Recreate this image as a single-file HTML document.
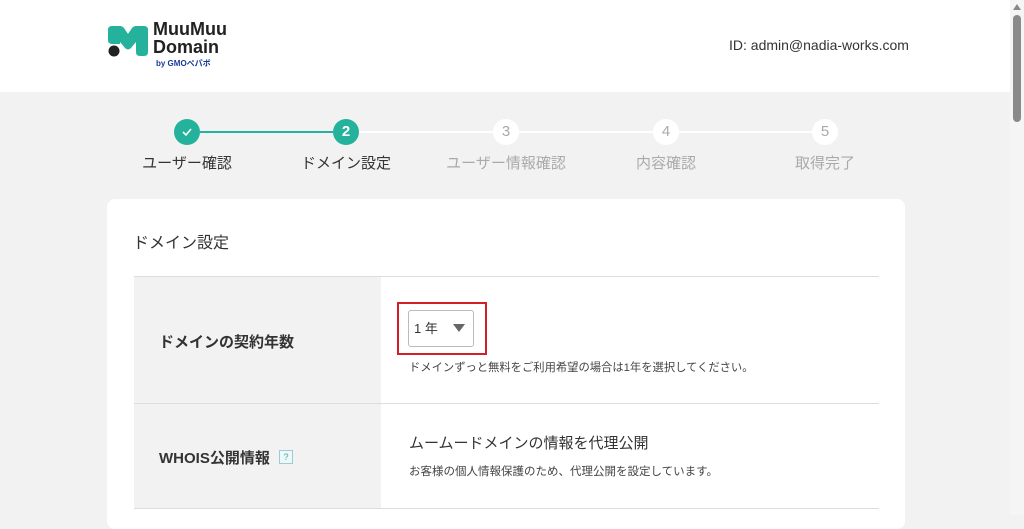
<!DOCTYPE html>
<html><head><meta charset="utf-8"><style>
*{margin:0;padding:0;box-sizing:border-box}
body{width:1024px;height:515px;overflow:hidden;background:#f2f2f2;font-family:"Liberation Sans","Noto Sans CJK JP",sans-serif;color:#333;position:relative}
.hdr{position:absolute;left:0;top:0;width:1010px;height:92px;background:#fff}
.abs{position:absolute}
.c{position:absolute;width:26px;height:26px;border-radius:50%;top:119px;text-align:center;line-height:26px;font-size:15px}
.lbl{position:absolute;top:152px;font-size:15px;width:160px;text-align:center}
.line{position:absolute;top:131px;height:2px}
.card{position:absolute;left:107px;top:199px;width:798px;height:330px;background:#fff;border-radius:8px}
.sb{position:absolute;left:1010px;top:0;width:14px;height:515px;background:#f5f5f5}
</style></head><body>
<div class="hdr">
<svg class="abs" style="left:106px;top:24px" width="44" height="34" viewBox="0 0 44 34"><path d="M6 2 H14 Q16 2 18 4 L22 10 L26 4 Q28 2 30 2 H38 Q42 2 42 6 V28 Q42 32 38 32 H34 Q30 32 30 28 V18 L25 24 Q22 27 19 24 L14 18 V20 H6 Q2 20 2 16 V6 Q2 2 6 2 Z" fill="#25b29c"/><circle cx="8" cy="27" r="5.5" fill="#222"/></svg>
<div class="abs" style="left:153px;top:20px;font-size:18px;font-weight:bold;line-height:18px;color:#222">MuuMuu<br>Domain</div>
<div class="abs" style="left:156px;top:58px;font-size:8px;font-weight:bold;color:#1a3a9a">by GMOペパボ</div>
<div class="abs" style="left:729px;top:37px;font-size:14px;color:#333">ID: admin@nadia-works.com</div>
</div>
<div class="line" style="left:200px;width:133px;background:#25b29c"></div>
<div class="line" style="left:359px;width:134px;background:#fff"></div>
<div class="line" style="left:519px;width:134px;background:#fff"></div>
<div class="line" style="left:679px;width:133px;background:#fff"></div>
<div class="c" style="left:174px;background:#25b29c;color:#fff"><svg width="14" height="14" viewBox="0 0 14 14" style="margin-top:6px"><path d="M3 7 L6 10 L11 4" stroke="#fff" stroke-width="1.6" fill="none"/></svg></div>
<div class="c" style="left:333px;background:#25b29c;color:#fff;font-weight:bold">2</div>
<div class="c" style="left:493px;background:#fff;color:#aaa">3</div>
<div class="c" style="left:653px;background:#fff;color:#aaa">4</div>
<div class="c" style="left:812px;background:#fff;color:#aaa">5</div>
<div class="lbl" style="left:107px">ユーザー確認</div>
<div class="lbl" style="left:266px">ドメイン設定</div>
<div class="lbl" style="left:426px;color:#aaa">ユーザー情報確認</div>
<div class="lbl" style="left:586px;color:#aaa">内容確認</div>
<div class="lbl" style="left:745px;color:#aaa">取得完了</div>
<div class="card"></div>
<div class="abs" style="left:133px;top:229px;font-size:16px">ドメイン設定</div>
<div class="abs" style="left:134px;top:276px;width:745px;height:1px;background:#ddd"></div>
<div class="abs" style="left:134px;top:277px;width:247px;height:126px;background:#f2f2f2"></div>
<div class="abs" style="left:134px;top:403px;width:745px;height:1px;background:#ddd"></div>
<div class="abs" style="left:134px;top:404px;width:247px;height:104px;background:#f2f2f2"></div>
<div class="abs" style="left:134px;top:508px;width:745px;height:1px;background:#ddd"></div>
<div class="abs" style="left:159px;top:331px;font-size:15px;font-weight:bold">ドメインの契約年数</div>
<div class="abs" style="left:397px;top:302px;width:90px;height:53px;border:2px solid #d0202a"></div>
<div class="abs" style="left:408px;top:310px;width:66px;height:37px;border:1px solid #bbb;border-radius:3px;background:#fff;font-size:13px;line-height:35px;padding-left:5px">1 年</div>
<svg class="abs" style="left:453px;top:324px" width="12" height="9"><path d="M0 0 H12 L6 8 Z" fill="#666"/></svg>
<div class="abs" style="left:409px;top:359px;font-size:11.3px;color:#444">ドメインずっと無料をご利用希望の場合は1年を選択してください。</div>
<div class="abs" style="left:159px;top:447px;font-size:15px;font-weight:bold">WHOIS公開情報</div>
<div class="abs" style="left:279px;top:450px;width:14px;height:14px;border:1px solid #9cd;background:#eef8f7;font-size:9px;color:#4aa;text-align:center;line-height:12px">?</div>
<div class="abs" style="left:409px;top:432px;font-size:15px">ムームードメインの情報を代理公開</div>
<div class="abs" style="left:409px;top:463px;font-size:11.5px;color:#444">お客様の個人情報保護のため、代理公開を設定しています。</div>
<div class="sb"><svg class="abs" style="left:3px;top:4px" width="8" height="6"><path d="M0 6 L4 0 L8 6Z" fill="#888"/></svg><div class="abs" style="left:3px;top:15px;width:8px;height:107px;background:#8a8a8a;border-radius:4px"></div></div>
</body></html>
